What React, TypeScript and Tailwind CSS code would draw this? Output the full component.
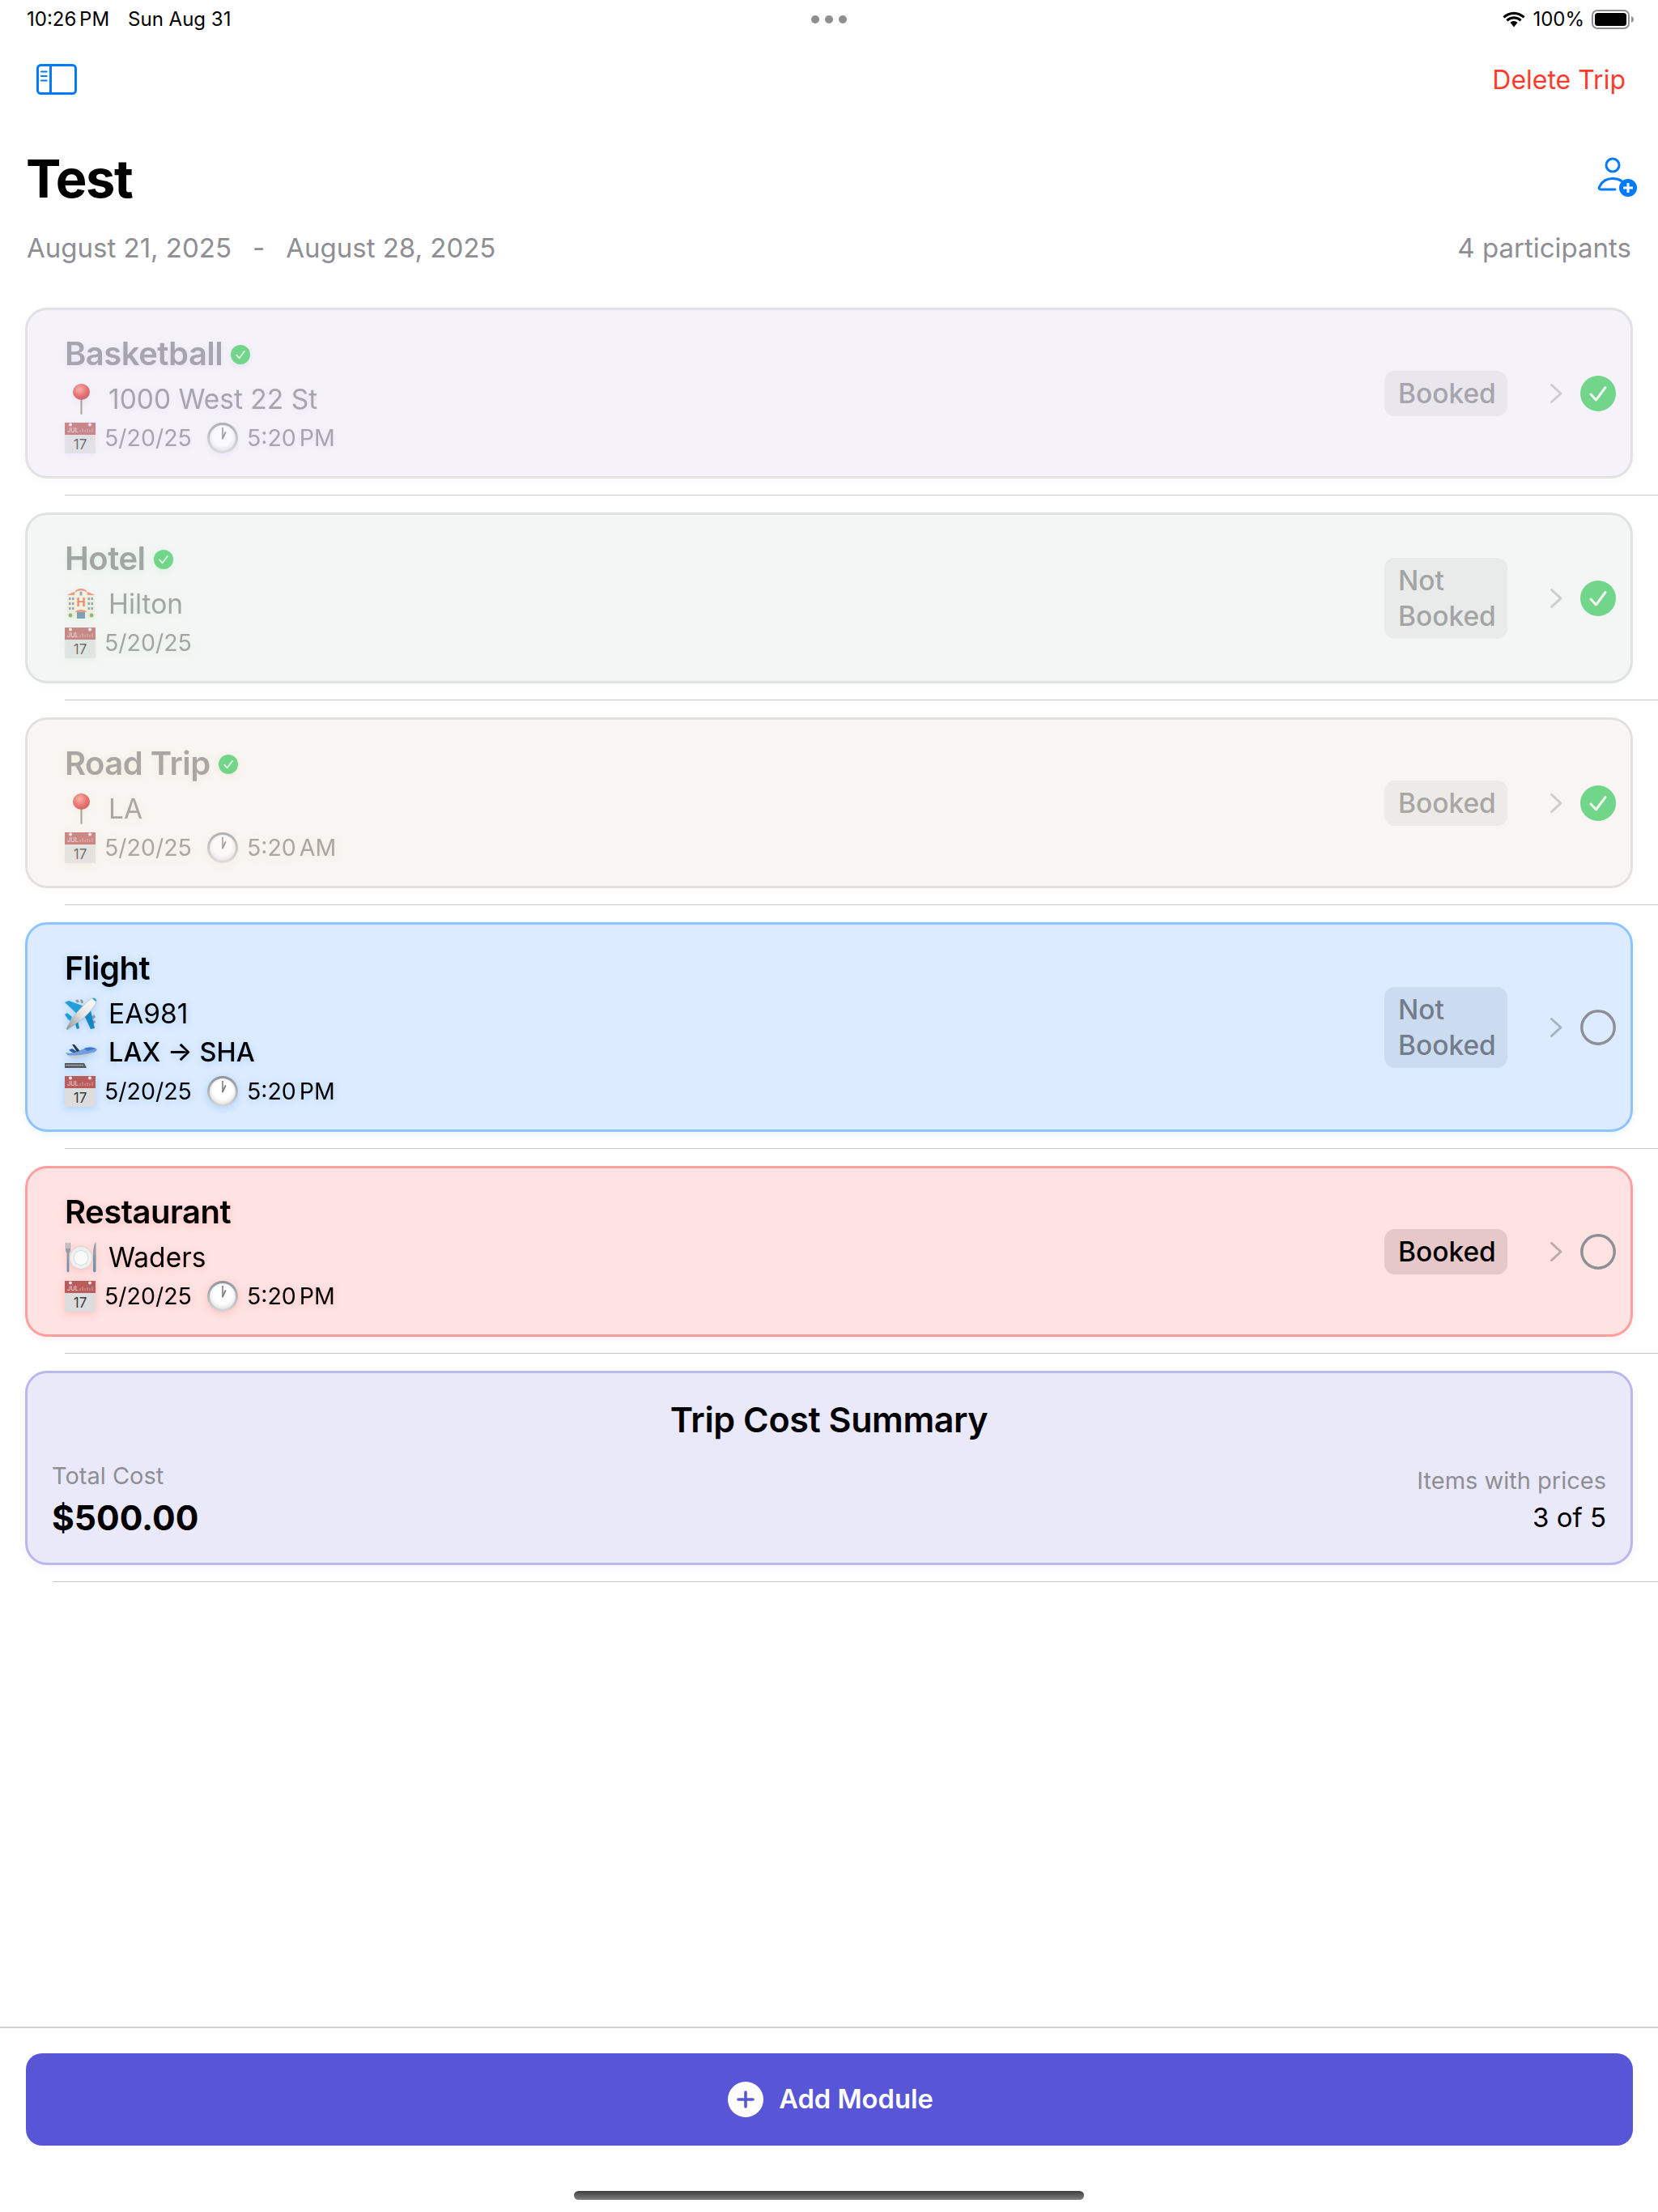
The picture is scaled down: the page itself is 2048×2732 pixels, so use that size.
import React from 'react';

const Calendar = () => (
  <svg width="38" height="38" viewBox="0 0 38 38" className="shrink-0">
    <rect x="0" y="15" width="38" height="23" fill="#dddddd" />
    <rect x="0" y="0" width="38" height="15" fill="#b85c5c" />
    <circle cx="7" cy="2.5" r="2" fill="#f3e6e6" />
    <circle cx="31" cy="2.5" r="2" fill="#f3e6e6" />
    <text x="3" y="12" fontSize="7.5" fill="#f2dede" fontFamily="Inter, sans-serif">JUL</text>
    <path d="M19 12V9M22 12V7M25 12V9M28 12V8M31 12V9M34 12V7" stroke="#cf8a8a" strokeWidth="1.4" />
    <text x="19" y="33" fontSize="17" textAnchor="middle" fill="#3a3a3c" fontFamily="Inter, sans-serif">17</text>
  </svg>
);

const Clock = () => (
  <svg width="38" height="38" viewBox="0 0 38 38" className="shrink-0">
    <defs>
      <linearGradient id="clockRim" x1="0" y1="0" x2="0" y2="1">
        <stop offset="0" stopColor="#8f9499" />
        <stop offset="1" stopColor="#d4d6d8" />
      </linearGradient>
      <radialGradient id="clockFace" cx="0.5" cy="0.45" r="0.6">
        <stop offset="0.6" stopColor="#ffffff" />
        <stop offset="1" stopColor="#dcdcdc" />
      </radialGradient>
    </defs>
    <circle cx="19" cy="19" r="19" fill="url(#clockRim)" />
    <circle cx="19" cy="19" r="16" fill="url(#clockFace)" />
    <path d="M19 19.5V6.5" stroke="#7d7d80" strokeWidth="1.6" strokeLinecap="round" />
    <path d="M19 19.5L22.5 12" stroke="#7d7d80" strokeWidth="1.8" strokeLinecap="round" />
  </svg>
);

const Pin = () => (
  <svg width="40" height="40" viewBox="0 0 40 40" className="shrink-0">
    <defs>
      <radialGradient id="pinHead" cx="0.4" cy="0.35" r="0.7">
        <stop offset="0" stopColor="#ff9a92" />
        <stop offset="0.6" stopColor="#e2413b" />
        <stop offset="1" stopColor="#b72a2a" />
      </radialGradient>
    </defs>
    <rect x="19.5" y="18" width="2" height="21" rx="1" fill="#8b7f70" />
    <ellipse cx="20.5" cy="11" rx="10.5" ry="10" fill="url(#pinHead)" />
  </svg>
);

const Hotel = () => (
  <svg width="40" height="40" viewBox="0 0 40 40" className="shrink-0">
    <rect x="3" y="7" width="34" height="31" fill="#f6e8d2" />
    <path d="M1 10L10 5.5H14L13 9H3ZM39 10L30 5.5H26L27 9H37Z" fill="#e8785a" />
    <path d="M12 9C12 3 16 1 20 1S28 3 28 9V38H12Z" fill="#fbeed8" />
    <path d="M12 6C13 2 17 1 20 1S27 2 28 6L26 5C24 3 16 3 14 5Z" fill="#e8785a" />
    <rect x="18.5" y="4.5" width="3" height="5" rx="1" fill="#5e8eb4" />
    <text x="20" y="23" fontSize="15" fontWeight="700" textAnchor="middle" fill="#e8604a" fontFamily="Inter, sans-serif">H</text>
    <path d="M5 12h2.500v3H5zM9 12h2.500v3H9zM28.500 12H31v3h-2.500zM32.500 12H35v3h-2.500zM5 18h2.500v3H5zM9 18h2.500v3H9zM28.500 18H31v3h-2.500zM32.500 18H35v3h-2.500zM5 24h2.500v3H5zM9 24h2.500v3H9zM28.500 24H31v3h-2.500zM32.500 24H35v3h-2.500z" fill="#5e8eb4" />
    <path d="M13 30C14 26 26 26 27 30Z" fill="#e8785a" />
    <rect x="15" y="30" width="10" height="8" fill="#4f7f9f" />
    <circle cx="7" cy="34" r="2.4" fill="#5f9e5a" />
    <circle cx="33" cy="34" r="2.4" fill="#5f9e5a" />
  </svg>
);

const Plane = () => (
  <svg width="40" height="40" viewBox="0 0 40 40" className="shrink-0">
    <defs>
      <linearGradient id="planeBody" x1="0" y1="1" x2="1" y2="0">
        <stop offset="0" stopColor="#8f9194" />
        <stop offset="0.5" stopColor="#e4e4e4" />
        <stop offset="1" stopColor="#ffffff" />
      </linearGradient>
    </defs>
    <path d="M13 3.500L16 2.500L18 5.500L15 6.500ZM19 2.500L22 3L23 7L20 7ZM36 21L38 24L35 27L33 24ZM37 28L38 31L35 33L33 30Z" fill="#8f979e" />
    <path d="M0 6L5 4L27 12L17 22Z" fill="#1f9fdc" />
    <path d="M22 18L31 11L37 38L32 39Z" fill="#1588c4" />
    <path d="M0 21L3 19L9 24L7 29L4 27Z" fill="#1f9fdc" />
    <path d="M11 27L16 29L18 38L15 39Z" fill="#1588c4" />
    <path d="M34 1C37 0 39.500 2 39 5C38 10 30 20 20 28C15 32 9 35 3 40L2 38.500C5 33 8 27 12 22C19 13 29 3 34 1Z" fill="url(#planeBody)" stroke="#9ea3a8" strokeWidth="0.5" />
    <path d="M34 1C37 0 39.500 2 39 5C37 4 35.500 3 34 1Z" fill="#2aa2dc" />
  </svg>
);

const Departure = () => (
  <svg width="40" height="40" viewBox="0 0 40 40" className="shrink-0">
    <path d="M5 17L9 15L17 20L11 21Z" fill="#2d5fb0" />
    <path d="M9 10L12 10L21 21L17 22Z" fill="#2a3342" />
    <path d="M1 20C8 22 14 20 22 16C28 13 36 13 40 16C38 20 32 22 26 23C18 25 8 26 4 24Z" fill="#6f9ee0" />
    <path d="M3 23C10 24 22 24 36 19C32 24 22 27 12 27C8 27 5 26 3 23Z" fill="#c7d0d4" />
    <path d="M24 15C28 13 34 13 38 15L28 18Z" fill="#3f74cc" />
    <path d="M0 33H24L27 39H0Z" fill="#55585c" />
    <path d="M1 35H23V36.300H1Z" fill="#a4a7aa" />
  </svg>
);

const Plate = () => (
  <svg width="40" height="40" viewBox="0 0 40 40" className="shrink-0">
    <defs>
      <linearGradient id="cutlery" x1="0" y1="0" x2="0" y2="1">
        <stop offset="0" stopColor="#9fa3a8" />
        <stop offset="1" stopColor="#6a8fae" />
      </linearGradient>
    </defs>
    <circle cx="20" cy="20.5" r="14" fill="#f0f0f0" stroke="#cfcfcf" strokeWidth="0.8" />
    <circle cx="20" cy="20.5" r="9" fill="#fafafa" stroke="#d8d8d8" strokeWidth="1" />
    <path d="M1 2V10C1 13 2 14 2.600 14.500V37C2.600 38.500 5.400 38.500 5.400 37V14.500C6 14 7 13 7 10V2H5.800V9H4.600V2H3.400V9H2.200V2Z" fill="url(#cutlery)" />
    <path d="M35 37C35 38.500 38.500 38.500 38.500 37V1C36 3 35 9 35 18Z" fill="url(#cutlery)" />
  </svg>
);

const Check = ({ size, className = '' }: { size: number; className?: string }) => (
  <svg width={size} height={size} viewBox="0 0 44 44" className={`shrink-0 ${className}`}>
    <circle cx="22" cy="22" r="22" fill="#72d68a" />
    <path d="M13 23L19.500 30L31 14.500" fill="none" stroke="#f4f6f2" strokeWidth="3" strokeLinecap="round" strokeLinejoin="round" />
  </svg>
);

const Chevron = ({ color }: { color: string }) => (
  <svg width="17" height="26" viewBox="0 0 17 26" className="shrink-0">
    <path d="M2.500 2.500L14 13L2.500 23.500" fill="none" stroke={color} strokeWidth="3" strokeLinecap="round" strokeLinejoin="round" />
  </svg>
);

type Line = { icon: React.ReactNode; text: string; bold?: boolean };

type Module = {
  title: string;
  done: boolean;
  lines: Line[];
  date: string;
  time?: string;
  status: string;
  wrap?: boolean;
  card: string;
  shadow: string;
  text: string;
  faded: string;
  badge: string;
  badgeText: string;
  chevron: string;
  ring?: string;
};

const modules: Module[] = [
  {
    title: 'Basketball', done: true, lines: [{ icon: <Pin />, text: '1000 West 22 St' }], date: '5/20/25', time: '5:20 PM', status: 'Booked',
    card: 'bg-[#f5f3f9] border-[#e2e2e5] shadow-[0_3px_8px_rgba(120,80,200,0.04)]', shadow: 'drop-shadow-[0_2px_5px_rgba(150,90,230,0.12)]',
    text: 'text-[#a6a4ac]', faded: 'opacity-70', badge: 'bg-[#e9e7ed]', badgeText: 'text-[#a6a4ac]', chevron: '#cdccd1',
  },
  {
    title: 'Hotel', done: true, lines: [{ icon: <Hotel />, text: 'Hilton' }], date: '5/20/25', status: 'Not Booked', wrap: true,
    card: 'bg-[#f3f6f4] border-[#e1e3e2] shadow-[0_3px_8px_rgba(80,200,120,0.04)]', shadow: 'drop-shadow-[0_2px_5px_rgba(80,210,120,0.12)]',
    text: 'text-[#a3a5a4]', faded: 'opacity-70', badge: 'bg-[#e8ebe9]', badgeText: 'text-[#a3a5a4]', chevron: '#cbcdcc',
  },
  {
    title: 'Road Trip', done: true, lines: [{ icon: <Pin />, text: 'LA' }], date: '5/20/25', time: '5:20 AM', status: 'Booked',
    card: 'bg-[#f8f5f2] border-[#e3e1df] shadow-[0_3px_8px_rgba(230,150,60,0.04)]', shadow: 'drop-shadow-[0_2px_5px_rgba(240,160,60,0.12)]',
    text: 'text-[#a9a6a4]', faded: 'opacity-70', badge: 'bg-[#ecebe8]', badgeText: 'text-[#a9a6a4]', chevron: '#cfcdcb',
  },
  {
    title: 'Flight', done: false,
    lines: [{ icon: <Plane />, text: 'EA981' }, { icon: <Departure />, text: 'LAX → SHA', bold: true }],
    date: '5/20/25', time: '5:20 PM', status: 'Not Booked', wrap: true,
    card: 'bg-[#dcebff] border-[#8fc3ff] shadow-[0_4px_10px_rgba(0,122,255,0.07)]', shadow: 'drop-shadow-[0_2px_5px_rgba(0,122,255,0.22)]',
    text: 'text-black', faded: '', badge: 'bg-[#cbdcf1]', badgeText: 'text-[#747c8b]', chevron: '#a8b3c1', ring: '#8d8f96',
  },
  {
    title: 'Restaurant', done: false, lines: [{ icon: <Plate />, text: 'Waders' }], date: '5/20/25', time: '5:20 PM', status: 'Booked',
    card: 'bg-[#ffe2e2] border-[#ff9f9f] shadow-[0_4px_10px_rgba(255,59,48,0.06)]', shadow: 'drop-shadow-[0_2px_5px_rgba(255,59,48,0.2)]',
    text: 'text-black', faded: '', badge: 'bg-[#e6c8c8]', badgeText: 'text-black', chevron: '#bba9ad', ring: '#8d8f96',
  },
];

function ModuleRow({ m }: { m: Module }) {
  return (
    <li className="pt-[21px]">
      <div className={`ml-[31px] mr-[31px] box-border border-[3px] rounded-[27px] pl-[46px] pr-[18px] flex items-center ${m.card}`}>
        <div className={`flex-1 flex flex-col pt-[30px] pb-[23px] ${m.text} ${m.shadow}`}>
          <div className="h-[48px] flex items-center mb-[8px]">
            <span className="text-[40px] font-semibold tracking-[-0.5px] leading-none">{m.title}</span>
            {m.done && <Check size={24} className="ml-[10px] mt-[2px]" />}
          </div>
          {m.lines.map((l) => (
            <div key={l.text} className={`h-[48px] flex items-center gap-[14px] ${l.bold ? 'font-medium text-[32.5px]' : 'text-[33.5px]'}`}>
              <span className={`flex ${m.faded}`}>{l.icon}</span>
              <span>{l.text}</span>
            </div>
          ))}
          <div className="h-[48px] flex items-center text-[28.5px] [word-spacing:-4px]">
            <span className={`flex ${m.faded}`}><Calendar /></span>
            <span className="ml-[11px]">{m.date}</span>
            {m.time && (
              <>
                <span className={`flex ml-[19px] ${m.faded}`}><Clock /></span>
                <span className="ml-[11px]">{m.time}</span>
              </>
            )}
          </div>
        </div>
        <div className={`box-border w-[152px] rounded-[13px] px-[17px] py-[6px] text-[33.5px] leading-[44px] font-medium ${m.badge} ${m.badgeText}`}>
          {m.wrap ? <>Not<br />Booked</> : m.status}
        </div>
        <div className="ml-[52px] flex"><Chevron color={m.chevron} /></div>
        <div className="ml-[21px] flex">
          {m.done ? (
            <Check size={44} />
          ) : (
            <svg width="44" height="44" viewBox="0 0 44 44" className="shrink-0">
              <circle cx="22" cy="22" r="20.2" fill="none" stroke={m.ring} strokeWidth="3.4" />
            </svg>
          )}
        </div>
      </div>
      <div className="ml-[80px] mt-[20px] border-b border-[#c8c8ca]" />
    </li>
  );
}

export default function App() {
  return (
    <div className="w-[2048px] h-[2732px] bg-white flex flex-col text-black [font-family:Inter,sans-serif] overflow-hidden">
      {/* status bar */}
      <div className="h-[48px] px-[33px] grid grid-cols-3 items-center text-[24px]">
        <div className="flex gap-[23px]">
          <span className="[word-spacing:-3px]">10:26 PM</span>
          <span>Sun Aug 31</span>
        </div>
        <div className="flex justify-center gap-[7px]">
          <span className="w-[10px] h-[10px] rounded-full bg-[#8e8e93]" />
          <span className="w-[10px] h-[10px] rounded-full bg-[#8e8e93]" />
          <span className="w-[10px] h-[10px] rounded-full bg-[#8e8e93]" />
        </div>
        <div className="flex justify-end items-center">
          <svg width="28" height="20" viewBox="0 0 28 20">
            <path d="M14 4C18.500 4 22.500 5.700 25.500 8.600L27.600 6.300C24 2.800 19.200.7 14 .7S4 2.800.4 6.300L2.500 8.600C5.500 5.700 9.500 4 14 4Z" fill="#000" />
            <path d="M14 9.500C16.900 9.500 19.500 10.600 21.500 12.500L23.600 10.200C21 7.800 17.700 6.300 14 6.300S7 7.800 4.400 10.200L6.500 12.500C8.500 10.600 11.100 9.500 14 9.500Z" fill="#000" />
            <path d="M14 12C12.300 12 10.700 12.700 9.500 13.800L14 19.500L18.500 13.800C17.300 12.700 15.700 12 14 12Z" fill="#000" />
          </svg>
          <span className="ml-[9px]">100%</span>
          <svg width="53" height="24" viewBox="0 0 53 24" className="ml-[9px] -mr-[4px]">
            <rect x="1" y="1" width="45" height="22" rx="6" fill="none" stroke="#8e8e93" strokeWidth="2" />
            <rect x="4" y="4" width="39" height="16" rx="3.500" fill="#000" />
            <path d="M49 8C51 9 52 10.500 52 12S51 15 49 16Z" fill="#8e8e93" />
          </svg>
        </div>
      </div>

      {/* nav */}
      <div className="h-[100px] pl-[45px] pr-[40px] flex items-center justify-between">
        <svg width="50" height="38" viewBox="0 0 50 38">
          <rect x="1.500" y="1.500" width="47" height="35" rx="4" fill="none" stroke="#007aff" strokeWidth="3" />
          <path d="M17.500 1.500V36.500" stroke="#007aff" strokeWidth="3" />
          <path d="M6 9.500H12.500M6 15H12.500M6 20.500H12.500" stroke="#007aff" strokeWidth="2.200" strokeLinecap="round" />
        </svg>
        <span className="text-[#ff3b30] text-[32px] mt-[1px]">Delete Trip</span>
      </div>

      {/* heading */}
      <div className="h-[211px] pl-[32px] pr-[33px] pt-[28px]">
        <div className="flex items-start justify-between h-[90px]">
          <h1 className="text-[65px] leading-[90px] font-bold tracking-[-1.5px]">Test</h1>
          <svg width="50" height="50" viewBox="0 0 50 50" className="mt-[18px] -mr-[8px]">
            <circle cx="19" cy="10" r="8" fill="none" stroke="#007aff" strokeWidth="3" />
            <path d="M22 40H5C2 40 1.500 38.500 3 36C6 30 12 26.500 19 26.500C23 26.500 27 27.500 30 29.500" fill="none" stroke="#007aff" strokeWidth="3" strokeLinecap="round" />
            <circle cx="38" cy="38" r="11" fill="#007aff" />
            <path d="M38 32V44M32 38H44" stroke="#fff" strokeWidth="3" />
          </svg>
        </div>
        <div className="flex items-center justify-between text-[33px] text-[#8e8e93] mt-[16px]">
          <div className="flex pl-[1px]">
            <span>August 21, 2025</span>
            <span className="ml-[26px]">-</span>
            <span className="ml-[26px]">August 28, 2025</span>
          </div>
          <span>4 participants</span>
        </div>
      </div>

      {/* modules */}
      <ul className="flex-1">
        {modules.map((m) => (
          <ModuleRow key={m.title} m={m} />
        ))}
        <li className="pt-[21px]">
          <div className="ml-[31px] mr-[31px] box-border h-[240px] border-[3px] border-[#b9b8ee] bg-[#eae9fa] rounded-[27px] px-[30px] shadow-[0_4px_10px_rgba(88,86,214,0.05)] flex flex-col">
            <div className="text-center text-[43px] font-semibold tracking-[-0.4px] leading-[50px] mt-[32px]">Trip Cost Summary</div>
            <div className="flex justify-between mt-[25px]">
              <div>
                <div className="text-[29px] leading-[40px] text-[#8e8e93]">Total Cost</div>
                <div className="text-[42.5px] leading-[56px] font-bold mt-[4px]">$500.00</div>
              </div>
              <div className="text-right">
                <div className="text-[29px] leading-[40px] text-[#8e8e93] mt-[6px]">Items with prices</div>
                <div className="text-[33px] leading-[46px] mt-[2px]">3 of 5</div>
              </div>
            </div>
          </div>
          <div className="ml-[65px] mt-[20px] border-b border-[#c8c8ca]" />
        </li>
      </ul>

      {/* footer */}
      <div className="h-[229px] border-t-2 border-[#d1d1d3] px-[32px] pt-[31px] relative">
        <div className="h-[114px] mr-[-1px] rounded-[20px] bg-[#5856d6] flex items-center justify-center gap-[19px] text-white">
          <svg width="44" height="44" viewBox="0 0 44 44" className="ml-[3px]">
            <circle cx="22" cy="22" r="22" fill="#fff" />
            <path d="M22 13V31M13 22H31" stroke="#5856d6" strokeWidth="3.600" strokeLinecap="round" />
          </svg>
          <span className="text-[32.7px] font-semibold">Add Module</span>
        </div>
        <div className="absolute left-[709px] top-[201px] w-[630px] h-[11px] rounded-full bg-gradient-to-b from-[#3e3e3e] to-[#808080]" />
      </div>
    </div>
  );
}
